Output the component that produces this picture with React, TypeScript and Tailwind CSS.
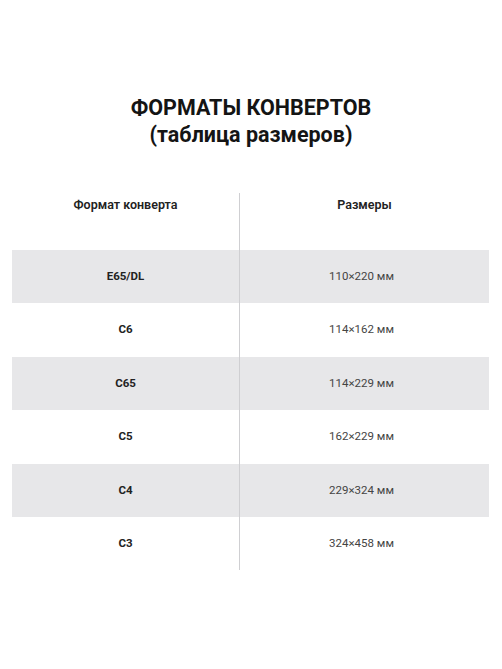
import React from "react";

const rows: [string, string][] = [
  ["E65/DL", "110×220 мм"],
  ["C6", "114×162 мм"],
  ["C65", "114×229 мм"],
  ["C5", "162×229 мм"],
  ["C4", "229×324 мм"],
  ["C3", "324×458 мм"],
];

export default function App() {
  return (
    <div
      className="w-[502px] h-[669px] bg-white text-[#141414]"
      style={{ fontFamily: "Roboto, 'Liberation Sans', sans-serif" }}
    >
      <div className="pt-[94px] text-center text-[21.5px] leading-[27px] font-bold">
        <div>ФОРМАТЫ КОНВЕРТОВ</div>
        <div>(таблица размеров)</div>
      </div>
      <div className="mx-[12px] w-[477px] mt-[45px]">
        <div className="flex h-[57px]">
          <div className="w-[227px] text-center pt-[4px] text-[12.5px] leading-[16px] font-semibold text-[#222]">
            Формат конверта
          </div>
          <div className="flex-1 border-l border-[#cfcfd2] text-center pt-[4px] text-[12.5px] leading-[16px] font-semibold text-[#222]">
            Размеры
          </div>
        </div>
        {rows.map(([a, b], i) => (
          <div
            key={a}
            className={`flex h-[53.4px] items-center ${i % 2 === 0 ? "bg-[#e7e7e9]" : "bg-white"}`}
          >
            <div className="w-[227px] text-center text-[11.5px] font-bold text-[#222]">
              {a}
            </div>
            <div className="flex-1 h-full flex items-center justify-center pr-[6px] border-l border-[#cfcfd2] text-[11.5px] text-[#444]">
              {b}
            </div>
          </div>
        ))}
      </div>
    </div>
  );
}
